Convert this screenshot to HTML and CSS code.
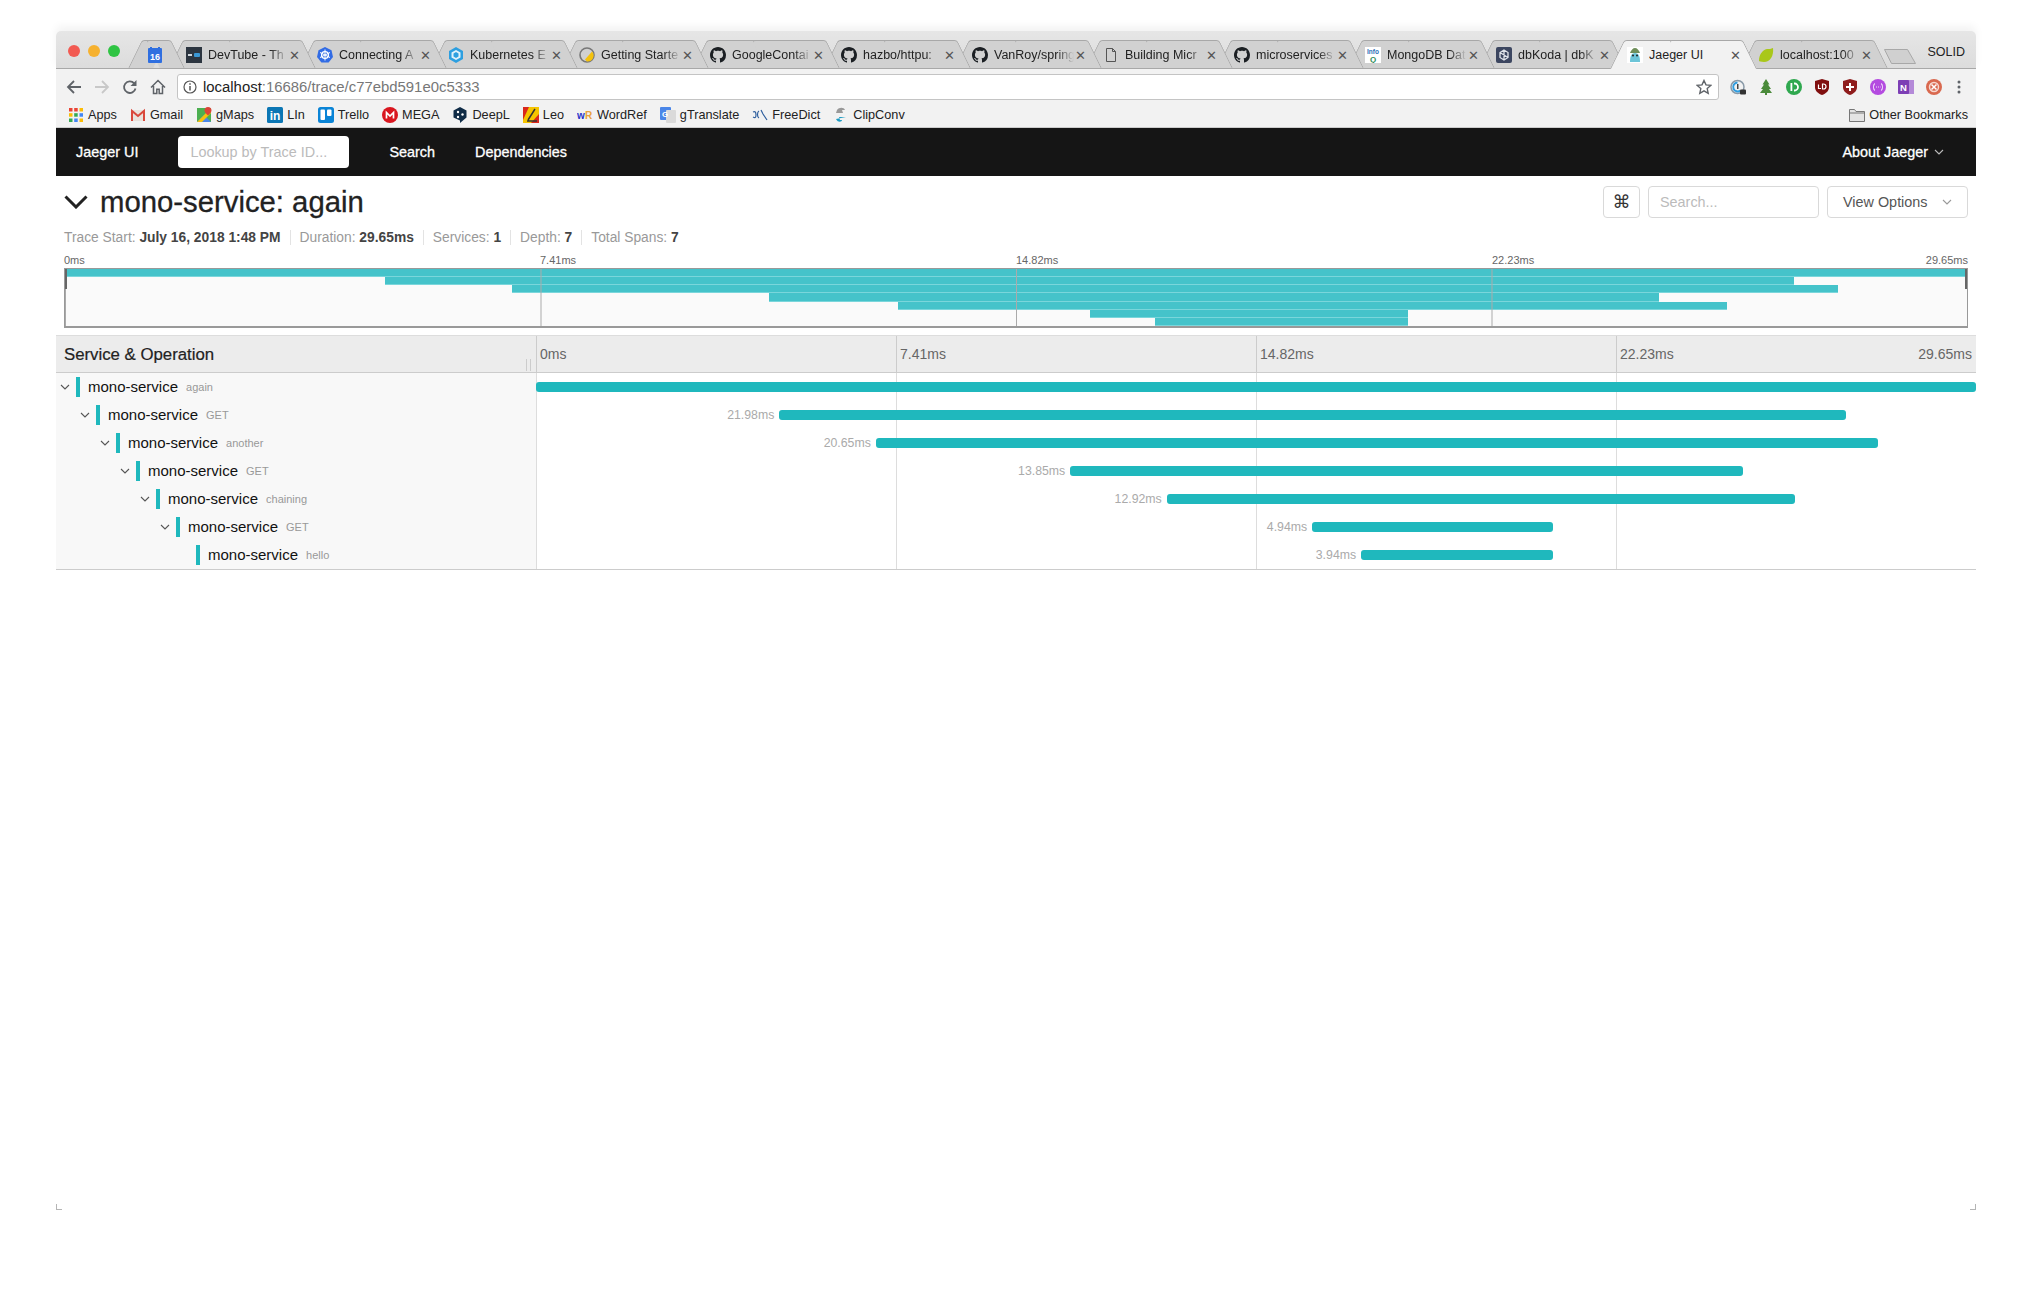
FILE: index.html
```html
<!DOCTYPE html>
<html lang="en">
<head>
    <meta charset="UTF-8">
    <title>Jaeger UI</title>
    <link rel="stylesheet" href="styles.css">
</head>
<body>
    <svg class="defs" width="0" height="0">
        <symbol id="gh" viewBox="0 0 16 16"><path fill="#1b1f23" d="M8 0C3.58 0 0 3.58 0 8c0 3.54 2.29 6.53 5.47 7.59.4.07.55-.17.55-.38 0-.19-.01-.82-.01-1.49-2.01.37-2.53-.49-2.69-.94-.09-.23-.48-.94-.82-1.13-.28-.15-.68-.52-.01-.53.63-.01 1.08.58 1.23.82.72 1.21 1.87.87 2.33.66.07-.52.28-.87.51-1.07-1.78-.2-3.64-.89-3.64-3.95 0-.87.31-1.59.82-2.15-.08-.2-.36-1.02.08-2.12 0 0 .67-.21 2.2.82.64-.18 1.32-.27 2-.27s1.36.09 2 .27c1.53-1.04 2.2-.82 2.2-.82.44 1.1.16 1.92.08 2.12.51.56.82 1.27.82 2.15 0 3.07-1.87 3.75-3.65 3.95.29.25.54.73.54 1.48 0 1.07-.01 1.93-.01 2.2 0 .21.15.46.55.38A8.013 8.013 0 0016 8c0-4.42-3.58-8-8-8z"/></symbol>
        <symbol id="caret" viewBox="0 0 10 10"><path fill="none" stroke="currentColor" stroke-width="1.1" d="M1 3l4 4 4-4"/></symbol>
    </svg>

    <div class="window">
        <div class="tabstrip">
            <div class="traffic"><i class="red"></i><i class="yellow"></i><i class="green"></i></div>
            <div class="tabs">
                <div class="tab pinned"><span class="tab-in">
                    <svg class="fav" viewBox="0 0 16 16"><rect x="1" y="1" width="14" height="15" rx="1" fill="#2f6fe0"/><rect x="3" y="0" width="2" height="3" fill="#2f6fe0"/><rect x="11" y="0" width="2" height="3" fill="#2f6fe0"/><text x="8" y="13" font-size="9" font-weight="700" fill="#fff" text-anchor="middle" font-family="Liberation Sans">16</text></svg>
                </span></div>
                <div class="tab"><span class="tab-in">
                    <svg class="fav" viewBox="0 0 16 16"><rect width="16" height="16" fill="#2c3540"/><rect x="8" y="6" width="6" height="4" rx="1" fill="#3a97d4"/><rect x="2" y="7" width="4" height="2" fill="#cfd6dc"/></svg>
                    <span class="title">DevTube - Th</span><span class="close">✕</span>
                </span></div>
                <div class="tab"><span class="tab-in">
                    <svg class="fav" viewBox="0 0 16 16"><path fill="#326ce5" d="M8 0l6.500 3.200L16 10l-4.400 5.600H4.400L0 10l1.500-6.800z"/><circle cx="8" cy="8" r="3.400" fill="none" stroke="#fff" stroke-width="1.300"/><path stroke="#fff" d="M8 2.500v11M3 5.500l10 5M13 5.500l-10 5"/></svg>
                    <span class="title">Connecting A</span><span class="close">✕</span>
                </span></div>
                <div class="tab"><span class="tab-in">
                    <svg class="fav" viewBox="0 0 16 16"><path fill="#2d9fe0" d="M8 0l7 4v8l-7 4-7-4V4z"/><path fill="#dff1fb" d="M8 3l4.500 2.500v5L8 13l-4.500-2.500v-5z"/><path fill="#2d9fe0" d="M8 5l2.500 1.500v3L8 11 5.500 9.500v-3z"/></svg>
                    <span class="title">Kubernetes E</span><span class="close">✕</span>
                </span></div>
                <div class="tab"><span class="tab-in">
                    <svg class="fav" viewBox="0 0 16 16"><circle cx="8" cy="8" r="7" fill="none" stroke="#777" stroke-width="1.600"/><path fill="#f4c20d" d="M13 4.500a6 6 0 0 1-5 10 6 6 0 0 1-2-2z"/></svg>
                    <span class="title">Getting Starte</span><span class="close">✕</span>
                </span></div>
                <div class="tab"><span class="tab-in"><svg class="fav"><use href="#gh"/></svg><span class="title">GoogleContai</span><span class="close">✕</span></span></div>
                <div class="tab"><span class="tab-in"><svg class="fav"><use href="#gh"/></svg><span class="title">hazbo/httpu:</span><span class="close">✕</span></span></div>
                <div class="tab"><span class="tab-in"><svg class="fav"><use href="#gh"/></svg><span class="title">VanRoy/spring</span><span class="close">✕</span></span></div>
                <div class="tab"><span class="tab-in">
                    <svg class="fav" viewBox="0 0 16 16"><path fill="none" stroke="#555" d="M3.500 1.500h6l3 3v10h-9z M9.500 1.500v3h3"/></svg>
                    <span class="title">Building Micr</span><span class="close">✕</span>
                </span></div>
                <div class="tab"><span class="tab-in"><svg class="fav"><use href="#gh"/></svg><span class="title">microservices</span><span class="close">✕</span></span></div>
                <div class="tab"><span class="tab-in">
                    <svg class="fav" viewBox="0 0 16 16"><rect width="16" height="16" fill="#fff"/><text x="8" y="7" font-size="6.500" font-weight="700" fill="#2d6fb8" text-anchor="middle" font-family="Liberation Sans">Info</text><text x="8" y="14.500" font-size="8" font-weight="700" fill="#2e8b57" text-anchor="middle" font-family="Liberation Sans">Q</text></svg>
                    <span class="title">MongoDB Dat</span><span class="close">✕</span>
                </span></div>
                <div class="tab"><span class="tab-in">
                    <svg class="fav" viewBox="0 0 16 16"><rect width="16" height="16" rx="2" fill="#3c4660"/><path fill="none" stroke="#dfe3ea" stroke-width="1.300" d="M8 3l4 2.500v5L8 13l-4-2.500v-5zM8 3v10M4 5.500l8 5"/></svg>
                    <span class="title">dbKoda | dbK</span><span class="close">✕</span>
                </span></div>
                <div class="tab active"><span class="tab-in">
                    <svg class="fav" viewBox="0 0 16 16"><rect width="16" height="16" fill="#fff"/><path fill="#6cc5d8" d="M3 15c0-5 1-9 5-9s5 4 5 9z"/><path fill="#6f8f5a" d="M3 6c1-3 3-5 5-5s4 2 5 5z"/><circle cx="6" cy="8.500" r="1" fill="#222"/><circle cx="10" cy="8.500" r="1" fill="#222"/></svg>
                    <span class="title solid">Jaeger UI</span><span class="close">✕</span>
                </span></div>
                <div class="tab"><span class="tab-in">
                    <svg class="fav" viewBox="0 0 16 16"><path fill="#a9c71a" d="M15 1c1 8-3 14-9 14-3 0-5-1-5-1 0-6 3-11 8-12 2 0 4 0 6-1z"/></svg>
                    <span class="title">localhost:100</span><span class="close">✕</span>
                </span></div>
            </div>
            <svg class="newtab" viewBox="0 0 34 17"><path fill="#d0d0d0" stroke="#a8a8a8" d="M1.500 1.500h23l8 14h-24z"/></svg>
            <span class="profile">SOLID</span>
        </div>

        <div class="toolbar">
            <svg class="nav-ic" viewBox="0 0 16 16"><path fill="none" stroke="#5f6368" stroke-width="1.800" d="M15 8H2M8 2L2 8l6 6"/></svg>
            <svg class="nav-ic" viewBox="0 0 16 16"><path fill="none" stroke="#c8c8c8" stroke-width="1.800" d="M1 8h13M8 2l6 6-6 6"/></svg>
            <svg class="nav-ic" viewBox="0 0 16 16"><path fill="none" stroke="#5f6368" stroke-width="1.800" d="M13.500 9.500a5.800 5.800 0 1 1-1.300-5.200"/><path fill="#5f6368" d="M14.500 1v6h-6z"/></svg>
            <svg class="nav-ic" viewBox="0 0 16 16"><path fill="none" stroke="#5f6368" stroke-width="1.500" d="M1 8.500L8 1.500l7 7M3.500 7v7.500h3.300v-4.300h2.400v4.300h3.300V7"/></svg>
            <div class="omnibox">
                <svg class="info" viewBox="0 0 14 14"><circle cx="7" cy="7" r="6" fill="none" stroke="#555" stroke-width="1.200"/><path stroke="#555" stroke-width="1.500" d="M7 6v4.500M7 3.200v1.500"/></svg>
                <span class="url"><b>localhost</b>:16686/trace/c77ebd591e0c5333</span>
                <svg class="star" viewBox="0 0 16 16"><path fill="none" stroke="#5f6368" stroke-width="1.400" d="M8 1.500l2 4.400 4.800.5-3.600 3.200 1 4.700L8 11.900l-4.200 2.400 1-4.700L1.200 6.400 6 5.900z"/></svg>
            </div>
            <div class="exts">
                <svg viewBox="0 0 16 16"><circle cx="7.500" cy="8" r="6.500" fill="none" stroke="#8a9aa8" stroke-width="1.500"/><path fill="none" stroke="#2f9de0" stroke-width="2" d="M7.500 3.500a4.500 4.500 0 1 0 3 8"/><rect x="7" y="5" width="1.500" height="5" fill="#444"/><rect x="10" y="10.500" width="6" height="5" rx="1" fill="#333"/></svg>
                <svg viewBox="0 0 16 16"><path fill="#4a8a3a" d="M8 0l3.500 5.500H10L13 10h-2l3 4H9v2H7v-2H2l3-4H3l3-4.500H4.500z"/></svg>
                <svg viewBox="0 0 16 16"><circle cx="8" cy="8" r="8" fill="#2fa84f"/><rect x="4.500" y="4" width="1.800" height="8" fill="#fff"/><path fill="none" stroke="#fff" stroke-width="1.800" d="M8 4.500h.5a3.500 3.500 0 0 1 0 7H8"/></svg>
                <svg viewBox="0 0 16 16"><path fill="#800f0f" d="M8 0l7 2v6c0 4-3 6.500-7 8-4-1.500-7-4-7-8V2z"/><path fill="none" stroke="#fff" stroke-width="1.200" d="M4.500 5.500v4h2.500M8.500 5v5h1a2.500 2.500 0 0 0 0-5z"/></svg>
                <svg viewBox="0 0 16 16"><path fill="#8f1d1d" d="M8 0l7 2v6c0 4-3 6.500-7 8-4-1.500-7-4-7-8V2z"/><path fill="#fff" d="M7 4h2v3h3v2H9v3H7V9H4V7h3z"/></svg>
                <svg viewBox="0 0 16 16"><circle cx="8" cy="8" r="8" fill="#b44be0"/><path fill="none" stroke="#fff" d="M5 4.500c-1.500 0-1 3.500-2 3.500 1 0 .5 3.500 2 3.500M11 4.500c1.500 0 1 3.500 2 3.500-1 0-.5 3.500-2 3.500M6 8h.8M8 8h.8M10 8h.5"/></svg>
                <svg viewBox="0 0 16 16"><rect x="5" y="1" width="11" height="14" fill="#b48ad8"/><rect y="1" width="11" height="14" rx="1" fill="#7d3fb5"/><text x="5.500" y="11.500" font-size="9.500" font-weight="700" fill="#fff" text-anchor="middle" font-family="Liberation Sans">N</text></svg>
                <svg viewBox="0 0 16 16"><circle cx="8" cy="8" r="8" fill="#d9694f"/><circle cx="8" cy="8" r="4.500" fill="none" stroke="#f6d8d0" stroke-width="1.500"/><path stroke="#fff" stroke-width="1.500" d="M5.500 5.500l5 5M10.500 5.500l-5 5"/></svg>
                <svg class="dots" viewBox="0 0 4 16"><circle cx="2" cy="3" r="1.500" fill="#5f6368"/><circle cx="2" cy="8" r="1.500" fill="#5f6368"/><circle cx="2" cy="13" r="1.500" fill="#5f6368"/></svg>
            </div>
        </div>

        <div class="bookmarks">
            <a><svg viewBox="0 0 16 16"><g fill="#ea4335"><rect x="1" y="1" width="3.500" height="3.500"/><rect x="6.200" y="1" width="3.500" height="3.500"/></g><rect x="11.500" y="1" width="3.500" height="3.500" fill="#fbbc05"/><rect x="1" y="6.200" width="3.500" height="3.500" fill="#fbbc05"/><rect x="6.200" y="6.200" width="3.500" height="3.500" fill="#34a853"/><rect x="11.500" y="6.200" width="3.500" height="3.500" fill="#4285f4"/><rect x="1" y="11.500" width="3.500" height="3.500" fill="#34a853"/><rect x="6.200" y="11.500" width="3.500" height="3.500" fill="#4285f4"/><rect x="11.500" y="11.500" width="3.500" height="3.500" fill="#fbbc05"/></svg>Apps</a>
            <a><svg viewBox="0 0 16 16"><path fill="#e8e2dc" d="M1 3h14v11H1z"/><path fill="none" stroke="#d9483b" stroke-width="2" d="M2 14V4l6 5 6-5v10"/></svg>Gmail</a>
            <a><svg viewBox="0 0 16 16"><path fill="#4caf50" d="M1 1h14v14H1z"/><path fill="#4a86e8" d="M1 15l7-7 7 7z"/><path fill="#f4c20d" d="M1 15L13 3l2 3-9 9z"/><path fill="#db4437" d="M12 0a3.500 3.500 0 0 1 3.500 3.500c0 2-3.500 5-3.500 5s-3.500-3-3.500-5A3.500 3.500 0 0 1 12 0z"/></svg>gMaps</a>
            <a><svg viewBox="0 0 16 16"><rect width="16" height="16" rx="1.500" fill="#0b76b4"/><text x="8" y="13" font-size="12" font-weight="700" fill="#fff" text-anchor="middle" font-family="Liberation Sans">in</text></svg>LIn</a>
            <a><svg viewBox="0 0 16 16"><rect width="16" height="16" rx="2.500" fill="#0a84d6"/><rect x="2.500" y="2.500" width="4.500" height="10.500" rx="1" fill="#fff"/><rect x="9" y="2.500" width="4.500" height="6.500" rx="1" fill="#fff"/></svg>Trello</a>
            <a><svg viewBox="0 0 16 16"><circle cx="8" cy="8" r="8" fill="#d9161f"/><path fill="none" stroke="#fff" stroke-width="1.700" d="M4.500 11.500v-6L8 9l3.500-3.500v6"/></svg>MEGA</a>
            <a><svg viewBox="0 0 16 16"><path fill="#0f2b46" d="M8 0l6.500 3.500v7L8 16v-2.500L1.500 10.500v-7z"/><circle cx="6" cy="5" r="1.200" fill="#fff"/><circle cx="6" cy="10" r="1.200" fill="#fff"/><circle cx="10.500" cy="7.500" r="1.200" fill="#fff"/></svg>DeepL</a>
            <a><svg viewBox="0 0 16 16"><rect width="16" height="16" fill="#d9271c"/><path fill="#f5c400" d="M6 0h10v7L8 16H0v-3z"/><path fill="none" stroke="#333" stroke-width="1.500" d="M4 14h10M5 13L12 2"/></svg>Leo</a>
            <a><svg viewBox="0 0 16 16"><text x="0" y="12" font-size="10" font-weight="700" fill="#2733c9" font-family="Liberation Sans">w</text><text x="8" y="12" font-size="10" font-weight="700" fill="#e9a23b" font-family="Liberation Sans">R</text></svg>WordRef</a>
            <a><svg viewBox="0 0 16 16"><rect width="11" height="13" rx="1" fill="#4a86e8"/><rect x="6" y="3" width="10" height="13" rx="1" fill="#dadada"/><text x="5" y="9.500" font-size="8" font-weight="700" fill="#fff" text-anchor="middle" font-family="Liberation Sans">G</text></svg>gTranslate</a>
            <a><svg viewBox="0 0 16 16"><path fill="none" stroke="#2f5f9e" stroke-width="1.200" d="M1 5c2-1 3 0 3 3s-1 3-3 2M7 4c-2 1-2 6 0 7M9 3l2 4 4 6"/></svg>FreeDict</a>
            <a><svg viewBox="0 0 16 16"><path fill="#999" d="M4 3c2-3 7-3 8 0H9l1 3H3z"/><path fill="#1d9cc4" d="M13 10H6l1 3h2c0 2-4 3-6-1z"/></svg>ClipConv</a>
            <a class="other"><svg viewBox="0 0 16 16"><path fill="#e4e4e4" stroke="#777" d="M.5 2.500h5l1.500 2h8.500v10H.5z"/><path stroke="#777" d="M.5 6h15"/></svg>Other Bookmarks</a>
        </div>

        <div class="topnav">
            <span class="brand">Jaeger UI</span>
            <input class="lookup" placeholder="Lookup by Trace ID...">
            <a class="navlink">Search</a>
            <a class="navlink">Dependencies</a>
            <a class="about">About Jaeger <svg class="caret"><use href="#caret"/></svg></a>
        </div>

        <div class="trace-head">
            <svg class="big-chevron" viewBox="0 0 24 14"><path fill="none" stroke="#222" stroke-width="3" d="M1.500 1.500L12 12 22.500 1.500"/></svg>
            <h1>mono-service: again</h1>
            <button class="cmd" aria-label="Keyboard shortcuts">⌘</button>
            <input class="search" placeholder="Search...">
            <button class="options">View Options <svg class="caret"><use href="#caret"/></svg></button>
        </div>

        <div class="meta">
            <span>Trace Start: <b>July 16, 2018 1:48 PM</b></span>
            <span>Duration: <b>29.65ms</b></span>
            <span>Services: <b>1</b></span>
            <span>Depth: <b>7</b></span>
            <span>Total Spans: <b>7</b></span>
        </div>

        <div class="minimap">
            <div class="mini-ticks">
                <span>0ms</span><span>7.41ms</span><span>14.82ms</span>
                <span class="last"><span>22.23ms</span><span>29.65ms</span></span>
            </div>
            <div class="mini-box">
                <div class="mini-row"><i style="margin-left:0;width:100%"></i></div>
                <div class="mini-row"><i style="margin-left:16.8%;width:74.1%"></i></div>
                <div class="mini-row"><i style="margin-left:23.5%;width:69.7%"></i></div>
                <div class="mini-row"><i style="margin-left:37%;width:46.8%"></i></div>
                <div class="mini-row"><i style="margin-left:43.8%;width:43.6%"></i></div>
                <div class="mini-row"><i style="margin-left:53.9%;width:16.7%"></i></div>
                <div class="mini-row"><i style="margin-left:57.3%;width:13.3%"></i></div>
            </div>
        </div>

        <div class="timeline">
            <div class="tl-head">
                <div class="tl-left">Service &amp; Operation<span class="resizer"></span></div>
                <div class="tl-ticks">
                    <span>0ms</span><span>7.41ms</span><span>14.82ms</span>
                    <span class="last"><span>22.23ms</span><span>29.65ms</span></span>
                </div>
            </div>

            <div class="row">
                <div class="name" style="padding-left:4px"><svg class="caret"><use href="#caret"/></svg><i class="mark"></i><span class="svc">mono-service</span><span class="op">again</span></div>
                <div class="cell"><div class="bar" style="margin-left:0;width:100%"></div></div>
            </div>
            <div class="row">
                <div class="name" style="padding-left:24px"><svg class="caret"><use href="#caret"/></svg><i class="mark"></i><span class="svc">mono-service</span><span class="op">GET</span></div>
                <div class="cell"><div class="bar" style="margin-left:16.9%;width:74.1%"><span class="dur">21.98ms</span></div></div>
            </div>
            <div class="row">
                <div class="name" style="padding-left:44px"><svg class="caret"><use href="#caret"/></svg><i class="mark"></i><span class="svc">mono-service</span><span class="op">another</span></div>
                <div class="cell"><div class="bar" style="margin-left:23.6%;width:69.6%"><span class="dur">20.65ms</span></div></div>
            </div>
            <div class="row">
                <div class="name" style="padding-left:64px"><svg class="caret"><use href="#caret"/></svg><i class="mark"></i><span class="svc">mono-service</span><span class="op">GET</span></div>
                <div class="cell"><div class="bar" style="margin-left:37.1%;width:46.7%"><span class="dur">13.85ms</span></div></div>
            </div>
            <div class="row">
                <div class="name" style="padding-left:84px"><svg class="caret"><use href="#caret"/></svg><i class="mark"></i><span class="svc">mono-service</span><span class="op">chaining</span></div>
                <div class="cell"><div class="bar" style="margin-left:43.8%;width:43.6%"><span class="dur">12.92ms</span></div></div>
            </div>
            <div class="row">
                <div class="name" style="padding-left:104px"><svg class="caret"><use href="#caret"/></svg><i class="mark"></i><span class="svc">mono-service</span><span class="op">GET</span></div>
                <div class="cell"><div class="bar" style="margin-left:53.9%;width:16.7%"><span class="dur">4.94ms</span></div></div>
            </div>
            <div class="row">
                <div class="name" style="padding-left:124px"><span class="nocaret"></span><i class="mark"></i><span class="svc">mono-service</span><span class="op">hello</span></div>
                <div class="cell"><div class="bar" style="margin-left:57.3%;width:13.3%"><span class="dur">3.94ms</span></div></div>
            </div>
        </div>
    </div>
</body>
</html>
```

FILE: styles.css
```css
:root {
    --teal: #1fb8bd;
    --mini-teal: #45c3ca;
    --line: #ddd;
}

* {
    box-sizing: border-box;
    margin: 0;
    padding: 0;
}

body {
    font-family: "Liberation Sans", Arial, sans-serif;
    background: #fff;
    padding: 31px 56px 0;
    color: #222;
}

.defs {
    position: absolute;
}

.window {
    position: relative;
    width: 1920px;
    height: 1179px;
}

/* little bits of the window shadow left in the bottom corners */
.window::before,
.window::after {
    content: "";
    position: absolute;
    bottom: 0;
    width: 5px;
    height: 5px;
    border-bottom: 1px solid #b5b5b5;
}

.window::before {
    left: 0;
    border-left: 1px solid #b5b5b5;
}

.window::after {
    right: 0;
    border-right: 1px solid #b5b5b5;
}

/* browser chrome */
.tabstrip {
    display: flex;
    height: 38px;
    padding-left: 12px;
    background: linear-gradient(#e6e6e6, #dcdcdc);
    border-bottom: 1px solid #a8a8a8;
    border-radius: 5px 5px 0 0;
    box-shadow: 0 -5px 9px rgba(0, 0, 0, 0.05);
}

.traffic {
    display: flex;
    gap: 8px;
    padding-top: 14px;
    width: 67px;
}

.traffic i {
    width: 12px;
    height: 12px;
    border-radius: 50%;
}

.red { background: #f25a52; }
.yellow { background: #f6b12f; }
.green { background: #2fc443; }

.tabs {
    display: flex;
    padding-top: 9px;
}

.tab {
    position: relative;
    width: 133px;
    height: 29px;
    margin-right: -2px;
    font-size: 12.5px;
    color: #222;
}

.tab::before,
.tab::after {
    content: "";
    position: absolute;
    top: 0;
    bottom: 1px;
    width: 55%;
    background: #d1d1d1;
    border-top: 1px solid #a8a8a8;
    border-radius: 3px 3px 0 0;
}

.tab::before {
    left: 0;
    border-left: 1px solid #a8a8a8;
    transform: skewX(-26deg);
}

.tab::after {
    right: 0;
    border-right: 1px solid #a8a8a8;
    transform: skewX(26deg);
}

.tab.active::before,
.tab.active::after {
    background: #f2f2f2;
    bottom: 0;
}

.tab.pinned {
    width: 43px;
}

.tab:nth-child(1) { z-index: 13; }
.tab:nth-child(2) { z-index: 12; }
.tab:nth-child(3) { z-index: 11; }
.tab:nth-child(4) { z-index: 10; }
.tab:nth-child(5) { z-index: 9; }
.tab:nth-child(6) { z-index: 8; }
.tab:nth-child(7) { z-index: 7; }
.tab:nth-child(8) { z-index: 6; }
.tab:nth-child(9) { z-index: 5; }
.tab:nth-child(10) { z-index: 4; }
.tab:nth-child(11) { z-index: 3; }
.tab:nth-child(12) { z-index: 2; }
.tab:nth-child(13) { z-index: 20; }
.tab:nth-child(14) { z-index: 1; }

.tab-in {
    position: relative;
    z-index: 1;
    display: flex;
    align-items: center;
    height: 28px;
    padding: 2px 9px 0 10px;
}

.pinned .tab-in {
    padding: 2px 0 0 12px;
}

.fav {
    flex: none;
    width: 16px;
    height: 16px;
}

.title {
    flex: 1;
    margin-left: 6px;
    overflow: hidden;
    white-space: nowrap;
    -webkit-mask-image: linear-gradient(to right, #000 78%, transparent 100%);
    mask-image: linear-gradient(to right, #000 78%, transparent 100%);
}

.title.solid {
    -webkit-mask-image: none;
    mask-image: none;
}

.close {
    flex: none;
    width: 12px;
    font-size: 13px;
    line-height: 1;
    text-align: center;
    color: #555;
}

.newtab {
    width: 34px;
    height: 17px;
    margin: 17px 0 0 4px;
}

.profile {
    margin-left: auto;
    margin-right: 11px;
    padding-top: 14px;
    font-size: 12.5px;
    color: #222;
}

.toolbar {
    display: flex;
    align-items: center;
    height: 31px;
    padding: 5px 0 0 10px;
    background: #f2f2f2;
}

.nav-ic {
    flex: none;
    width: 16px;
    height: 16px;
    margin-right: 12px;
}

.omnibox {
    flex: none;
    display: flex;
    align-items: center;
    width: 1542px;
    height: 26px;
    margin-left: -1px;
    padding: 0 6px 0 5px;
    background: #fff;
    border: 1px solid #c4c4c4;
    border-radius: 3px;
    font-size: 14.9px;
    color: #777;
}

.info {
    width: 14px;
    height: 14px;
    margin-right: 6px;
}

.url b {
    font-weight: 400;
    color: #222;
}

.star {
    width: 16px;
    height: 16px;
    margin-left: auto;
}

.exts {
    display: flex;
    align-items: center;
    gap: 12px;
    padding-left: 11px;
}

.exts svg {
    width: 16px;
    height: 16px;
}

.exts .dots {
    width: 4px;
    margin-left: 3px;
}

.bookmarks {
    display: flex;
    align-items: center;
    gap: 13px;
    height: 28px;
    padding: 2px 8px 0 12px;
    background: #f2f2f2;
    border-bottom: 1px solid #ccc;
    font-size: 12.7px;
    color: #222;
}

.bookmarks a {
    display: flex;
    align-items: center;
    gap: 4px;
}

.bookmarks svg {
    flex: none;
    width: 16px;
    height: 16px;
}

.bookmarks .other {
    margin-left: auto;
}

/* jaeger nav */
.topnav {
    display: flex;
    align-items: center;
    height: 48px;
    padding-left: 20px;
    background: #151515;
    color: #fff;
    font-size: 14.4px;
    -webkit-text-stroke: 0.3px #fff;
}

.lookup {
    width: 171px;
    height: 32px;
    margin: 0 40px;
    padding: 0 12px;
    border: 0;
    border-radius: 4px;
    background: #fff;
    font: 14.4px "Liberation Sans", Arial, sans-serif;
    -webkit-text-stroke: 0;
}

.lookup::placeholder,
.search::placeholder {
    color: #bbb;
}

.navlink {
    margin-right: 40px;
}

.about {
    display: flex;
    align-items: center;
    gap: 6px;
    margin-left: auto;
    margin-right: 32px;
}

.caret {
    flex: none;
    width: 10px;
    height: 10px;
    color: #555;
}

.about .caret {
    color: #bbb;
}

/* trace header */
.trace-head {
    display: flex;
    align-items: center;
    height: 51px;
    padding: 0 8px;
}

.big-chevron {
    width: 24px;
    height: 14px;
    margin-right: 12px;
}

h1 {
    flex: 1;
    font-size: 29.3px;
    font-weight: 400;
    color: #222;
    -webkit-text-stroke: 0.3px #222;
}

.cmd,
.search,
.options {
    height: 32px;
    background: #fff;
    border: 1px solid #d9d9d9;
    border-radius: 4px;
    font: 14.4px "Liberation Sans", Arial, sans-serif;
    color: #555;
}

.cmd {
    width: 37px;
    margin-right: 8px;
    font-size: 18px;
    font-family: "DejaVu Sans", sans-serif;
    color: #333;
}

.search {
    width: 171px;
    margin-right: 8px;
    padding: 0 11px;
}

.options {
    display: flex;
    align-items: center;
    justify-content: space-between;
    width: 141px;
    padding: 0 15px;
}

.options .caret {
    color: #999;
}

.meta {
    display: flex;
    align-items: center;
    height: 18px;
    padding: 2px 0 0 8px;
    font-size: 13.8px;
    color: #999;
}

.meta span {
    padding-right: 9px;
    margin-right: 9px;
    border-right: 1px solid #e3e3e3;
}

.meta span:last-child {
    border-right: 0;
}

.meta b {
    color: #444;
}

/* minimap */
.minimap {
    padding: 9px 8px 7px;
}

.mini-ticks,
.tl-ticks {
    display: grid;
    grid-template-columns: repeat(4, 1fr);
}

.mini-ticks {
    height: 13px;
    font-size: 11px;
    line-height: 13px;
    color: #666;
}

.last {
    display: flex;
    justify-content: space-between;
}

.mini-box {
    position: relative;
    display: flex;
    flex-direction: column;
    height: 60px;
    margin-top: 1px;
    background: #fafafa;
    border: 1px solid #999;
    border-bottom-width: 2px;
}

/* tick lines and the two drag handles go over the bars */
.mini-box::after {
    content: "";
    position: absolute;
    inset: 0;
    background:
        linear-gradient(#666, #666) left top / 2px 20px no-repeat,
        linear-gradient(#666, #666) right top / 2px 20px no-repeat,
        linear-gradient(to right, #aaa 1px, transparent 1px) left top / 25% 100%;
}

.mini-row {
    flex: 1;
    display: flex;
}

.mini-row i {
    display: block;
    background: var(--mini-teal);
    border-bottom: 1px solid #7ad6db;
}

/* span table */
.timeline {
    border-bottom: 1px solid #ccc;
}

.tl-head {
    display: flex;
    height: 38px;
    background: #ececec;
    border-top: 1px solid #ddd;
    border-bottom: 1px solid #ccc;
}

.tl-left {
    position: relative;
    width: 480px;
    padding-left: 8px;
    font-size: 16.8px;
    line-height: 38px;
    -webkit-text-stroke: 0.2px #222;
}

.resizer {
    position: absolute;
    right: 5px;
    bottom: 1px;
    width: 5px;
    height: 12px;
    border-left: 1px solid #ccc;
    border-right: 1px solid #ccc;
}

.tl-ticks {
    flex: 1;
    font-size: 14px;
    line-height: 36px;
    color: #666;
    background: linear-gradient(to right, #ccc 1px, transparent 1px) left top / 25% 100%;
}

.tl-ticks > span {
    padding: 0 4px;
}

.row {
    display: flex;
    height: 28px;
}

.name {
    display: flex;
    align-items: center;
    width: 480px;
    background: #f8f8f8;
    white-space: nowrap;
}

.name .caret,
.nocaret {
    flex: none;
    width: 10px;
}

.mark {
    width: 4px;
    height: 20px;
    margin: 0 8px 0 6px;
    background: var(--teal);
}

.svc {
    margin-bottom: 2px;
    font-size: 15px;
    color: #111;
}

.op {
    margin-left: 8px;
    font-size: 11px;
    color: #999;
}

.cell {
    flex: 1;
    display: flex;
    align-items: center;
    background: linear-gradient(to right, #ddd 1px, transparent 1px) left top / 25% 100%;
}

.bar {
    position: relative;
    height: 10px;
    background: var(--teal);
    border-radius: 3px;
}

.dur {
    position: absolute;
    right: 100%;
    top: -2px;
    margin-right: 5px;
    font-size: 12.3px;
    line-height: 14px;
    color: #aaa;
}
```
